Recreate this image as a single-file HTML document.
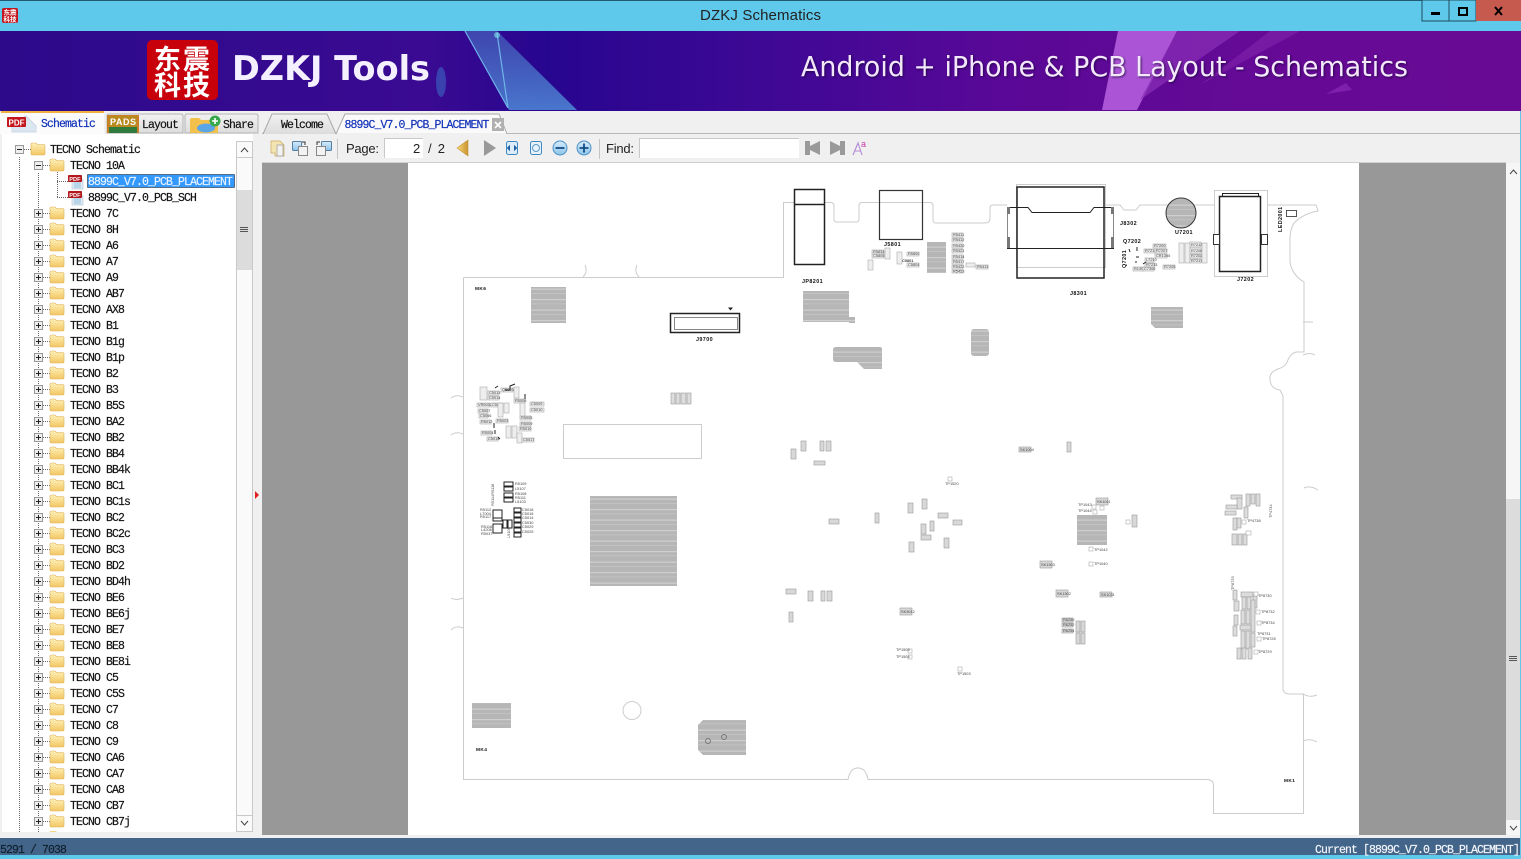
<!DOCTYPE html>
<html><head><meta charset="utf-8"><title>DZKJ Schematics</title>
<style>
html,body{margin:0;padding:0;background:#f0f0f0;width:1521px;height:859px;overflow:hidden}
svg{display:block;position:absolute;left:0;top:0}
.m{font-family:"Liberation Mono",monospace;font-size:11.5px;letter-spacing:-.9px;color:#111;fill:currentColor;stroke:currentColor;stroke-width:.18}
.s{font-family:"Liberation Sans",sans-serif}
.c{fill:#eee;stroke:#aaa;stroke-width:.6}
.t{font-family:"Liberation Sans",sans-serif;font-size:3.9px;fill:#444}
.b{font-family:"Liberation Sans",sans-serif;font-size:5.4px;font-weight:bold;fill:#111;letter-spacing:.4px}
.o{fill:none;stroke:#ccc;stroke-width:1}
.k{fill:none;stroke:#222;stroke-width:1.5}
.d{stroke:#666;stroke-width:1;stroke-dasharray:1 1;fill:none}
.sh{filter:drop-shadow(1px 1px 1px rgba(20,0,50,.7))}
</style></head><body>
<svg width="1521" height="859" viewBox="0 0 1521 859" xmlns="http://www.w3.org/2000/svg">
<defs>
<linearGradient id="bn" x1="0" x2="1" y1="0" y2="0">
<stop offset="0" stop-color="#2c0a8a"/><stop offset=".28" stop-color="#3a0a92"/><stop offset=".36" stop-color="#27068f"/><stop offset=".5" stop-color="#3d0895"/><stop offset=".66" stop-color="#5a0897"/><stop offset=".85" stop-color="#660a96"/><stop offset="1" stop-color="#680a94"/>
</linearGradient>
<linearGradient id="bm" x1="0" x2="0" y1="0" y2="1"><stop offset="0" stop-color="#4a78c8" stop-opacity=".55"/><stop offset="1" stop-color="#4f8ad8" stop-opacity=".85"/></linearGradient>
<linearGradient id="fo" x1="0" x2="0" y1="0" y2="1"><stop offset="0" stop-color="#fdf0b8"/><stop offset="1" stop-color="#f3c865"/></linearGradient>
<linearGradient id="tb" x1="0" x2="0" y1="0" y2="1"><stop offset="0" stop-color="#f2f2f2"/><stop offset="1" stop-color="#dcdcdc"/></linearGradient>
<linearGradient id="go" x1="0" x2="1" y1="0" y2="0"><stop offset="0" stop-color="#f7d878"/><stop offset="1" stop-color="#c9922e"/></linearGradient>
<linearGradient id="bl" x1="0" x2="0" y1="0" y2="1"><stop offset="0" stop-color="#d6ecfb"/><stop offset="1" stop-color="#8cc2ea"/></linearGradient>
<pattern id="h" width="10" height="10.5" patternUnits="userSpaceOnUse"><rect width="10" height="10.5" fill="#b6b6b6"/><rect y="5" width="10" height="1.2" fill="#cfcfcf"/><rect y="9.5" width="10" height=".8" fill="#c6c6c6"/></pattern>
<symbol id="f" viewBox="0 0 14 13" width="14" height="13" overflow="visible"><path d="M0 2.5Q0 1 1.5 1H5L6.5 2.5H12.5Q14 2.5 14 4V11.5Q14 13 12.5 13H1.5Q0 13 0 11.5Z" fill="url(#fo)" stroke="#dcae52" stroke-width=".6"/></symbol>
<symbol id="pl" viewBox="0 0 9 9" width="9" height="9"><rect x=".5" y=".5" width="8" height="8" fill="#eee" stroke="#999"/><path d="M2 4.500H7M4.500 2V7" stroke="#222" stroke-width="1"/></symbol>
<symbol id="mi" viewBox="0 0 9 9" width="9" height="9"><rect x=".5" y=".5" width="8" height="8" fill="#eee" stroke="#999"/><path d="M2 4.500H7" stroke="#222" stroke-width="1"/></symbol>
<symbol id="pd" viewBox="0 0 16 16" width="16" height="16"><path d="M4 2H11L15 6V15H4Z" fill="#dfe9f2" stroke="#b8cbdc" stroke-width=".7"/><path d="M6 9H13M6 11H13M6 13H13" stroke="#8fc0e0"/><rect x="0" y="1" width="14" height="7" rx="1" fill="#b3181c"/><text x="1.3" y="6.8" font-family="Liberation Sans" font-size="5.6" font-weight="bold" fill="#fff">PDF</text></symbol>
</defs>

<!-- window frame -->
<rect width="1521" height="859" fill="#f0f0f0"/>
<rect width="1521" height="31" fill="#5fc9ec"/>
<rect width="1521" height="1" fill="#1f5a72"/>
<rect x="2" y="8" width="16" height="15" rx="2" fill="#c3161c"/>
<text x="3.500" y="14.500" font-family="Noto Sans CJK SC" font-size="6.500" font-weight="bold" fill="#fff">东震</text>
<text x="3.500" y="21.500" font-family="Noto Sans CJK SC" font-size="6.500" font-weight="bold" fill="#fff">科技</text>
<text x="760.500" y="20" text-anchor="middle" class="s" font-size="15" fill="#222" textLength="121">DZKJ Schematics</text>
<rect x="1422" y="0" width="27" height="21" fill="#5fc9ec" stroke="#1f4d60"/>
<rect x="1449" y="0" width="27" height="21" fill="#5fc9ec" stroke="#1f4d60"/>
<rect x="1476" y="0" width="45" height="21" fill="#c65a4e"/>
<rect x="1431" y="12" width="9" height="3" fill="#000"/>
<rect x="1459" y="8" width="8" height="7" fill="none" stroke="#000" stroke-width="2"/>
<path d="M1495 7L1502 15M1502 7L1495 15" stroke="#000" stroke-width="2"/>

<!-- banner -->
<rect y="31" width="1521" height="80" fill="url(#bn)"/>
<ellipse cx="441" cy="82" rx="5" ry="15" fill="#3c96dc" opacity=".4"/>
<path d="M465 31H497L577 110H509Z" fill="url(#bm)"/>
<path d="M465 31L508 108M497 33L508 108" stroke="#6fb4ea" stroke-width="1.2" fill="none"/>
<circle cx="497" cy="35" r="3" fill="#7fe6ea" opacity=".6"/>
<path d="M1118 31H1177L1137 110H1102Z" fill="#ab55d6"/>
<path d="M1177 31H1240L1140 100Z" fill="#8a2fb6" opacity=".7"/>
<path d="M1270 31H1300L1200 85Z" fill="#7d1fa8" opacity=".7"/>
<path d="M1326 94L1346 83L1352 90Z" fill="#7f1fae"/>
<rect x="147" y="40" width="71" height="60" rx="5" fill="#c8000c"/>
<text x="154" y="69" font-family="Noto Sans CJK SC" font-size="27" font-weight="bold" fill="#fff" textLength="56">东震</text>
<text x="154" y="95" font-family="Noto Sans CJK SC" font-size="27" font-weight="bold" fill="#fff" textLength="56">科技</text>
<text x="232" y="80" font-family="DejaVu Sans" font-size="34" font-weight="bold" fill="#f4f0ff" textLength="198" lengthAdjust="spacingAndGlyphs">DZKJ Tools</text>
<text x="801" y="76" class="sh" font-family="DejaVu Sans" font-size="28" fill="#f2e8fa" textLength="607" lengthAdjust="spacingAndGlyphs">Android + iPhone &amp; PCB Layout - Schematics</text>

<!-- left tabs -->
<rect x="0" y="133" width="262" height="705" fill="#f0f0f0"/>
<path d="M107 133V116Q107 114 109 114H181Q183 114 183 116V133Z" fill="url(#tb)" stroke="#b5b5b5"/>
<path d="M185 133V116Q185 114 187 114H256Q258 114 258 116V133Z" fill="url(#tb)" stroke="#b5b5b5"/>
<path d="M0 134V113Q0 111 2 111H102Q104 111 104 113V134Z" fill="#fbfbfb"/>
<rect x="1" y="111" width="103" height="2" fill="#f0b040"/>
<path d="M12 122L26 116L36 126V132H12Z" fill="#dce6f0" stroke="#b4c8dc" stroke-width=".6"/>
<rect x="7" y="117" width="19" height="10" rx="1" fill="#c3161c"/>
<text x="8.500" y="125.500" class="s" font-size="8" font-weight="bold" fill="#fff">PDF</text>
<text x="41" y="127" class="m" style="color:#1030b8">Schematic</text>
<rect x="107" y="115" width="32" height="18" fill="#c88028"/>
<rect x="109" y="116" width="28" height="12" fill="#b88a20"/>
<rect x="109" y="127" width="28" height="6" fill="#2f7a3c"/>
<text x="110" y="125" class="s" font-size="9" font-weight="bold" fill="#fff" textLength="26">PADS</text>
<text x="142" y="128" class="m">Layout</text>
<path d="M190 120Q190 118 192 118H199L201 120H218V133H190Z" fill="#f3c04c"/>
<ellipse cx="206" cy="128" rx="9" ry="4.500" fill="#5aa5e6"/>
<circle cx="215" cy="121" r="5.500" fill="#39a84a"/><path d="M212 121H218M215 118V124" stroke="#fff" stroke-width="1.6"/>
<text x="223" y="128" class="m">Share</text>

<!-- tree -->
<rect x="2" y="134" width="251" height="698" fill="#fff"/>
<path class="d" d="M19.500 157V832M38.500 173V832M24 149.500H31"/>
<use href="#mi" x="15" y="145"/><use href="#f" x="31" y="142"/><text x="50" y="153" class="m">TECNO Schematic</text>
<path class="d" d="M43 165.500H50M43 213.500H50M43 229.500H50M43 245.500H50M43 261.500H50M43 277.500H50M43 293.500H50M43 309.500H50M43 325.500H50M43 341.500H50M43 357.500H50M43 373.500H50M43 389.500H50M43 405.500H50M43 421.500H50M43 437.500H50M43 453.500H50M43 469.500H50M43 485.500H50M43 501.500H50M43 517.500H50M43 533.500H50M43 549.500H50M43 565.500H50M43 581.500H50M43 597.500H50M43 613.500H50M43 629.500H50M43 645.500H50M43 661.500H50M43 677.500H50M43 693.500H50M43 709.500H50M43 725.500H50M43 741.500H50M43 757.500H50M43 773.500H50M43 789.500H50M43 805.500H50M43 821.500H50"/>
<use href="#mi" x="34" y="161"/><use href="#f" x="50" y="158"/><text x="70" y="169" class="m">TECNO 10A</text>
<path class="d" d="M57.500 172V197M57 181.500H68M57 197.500H68"/>
<use href="#pd" x="68" y="174"/>
<rect x="87.500" y="174.500" width="147" height="13" fill="#3399ff" stroke="#111" stroke-dasharray="1 1"/>
<text x="88" y="185" class="m" style="color:#e8f3ff">8899C_V7.0_PCB_PLACEMENT</text>
<use href="#pd" x="68" y="190"/><text x="88" y="201" class="m">8899C_V7.0_PCB_SCH</text>
<use href="#pl" x="34" y="209"/><use href="#f" x="50" y="206"/><text x="70" y="217" class="m">TECNO 7C</text>
<use href="#pl" x="34" y="225"/><use href="#f" x="50" y="222"/><text x="70" y="233" class="m">TECNO 8H</text>
<use href="#pl" x="34" y="241"/><use href="#f" x="50" y="238"/><text x="70" y="249" class="m">TECNO A6</text>
<use href="#pl" x="34" y="257"/><use href="#f" x="50" y="254"/><text x="70" y="265" class="m">TECNO A7</text>
<use href="#pl" x="34" y="273"/><use href="#f" x="50" y="270"/><text x="70" y="281" class="m">TECNO A9</text>
<use href="#pl" x="34" y="289"/><use href="#f" x="50" y="286"/><text x="70" y="297" class="m">TECNO AB7</text>
<use href="#pl" x="34" y="305"/><use href="#f" x="50" y="302"/><text x="70" y="313" class="m">TECNO AX8</text>
<use href="#pl" x="34" y="321"/><use href="#f" x="50" y="318"/><text x="70" y="329" class="m">TECNO B1</text>
<use href="#pl" x="34" y="337"/><use href="#f" x="50" y="334"/><text x="70" y="345" class="m">TECNO B1g</text>
<use href="#pl" x="34" y="353"/><use href="#f" x="50" y="350"/><text x="70" y="361" class="m">TECNO B1p</text>
<use href="#pl" x="34" y="369"/><use href="#f" x="50" y="366"/><text x="70" y="377" class="m">TECNO B2</text>
<use href="#pl" x="34" y="385"/><use href="#f" x="50" y="382"/><text x="70" y="393" class="m">TECNO B3</text>
<use href="#pl" x="34" y="401"/><use href="#f" x="50" y="398"/><text x="70" y="409" class="m">TECNO B5S</text>
<use href="#pl" x="34" y="417"/><use href="#f" x="50" y="414"/><text x="70" y="425" class="m">TECNO BA2</text>
<use href="#pl" x="34" y="433"/><use href="#f" x="50" y="430"/><text x="70" y="441" class="m">TECNO BB2</text>
<use href="#pl" x="34" y="449"/><use href="#f" x="50" y="446"/><text x="70" y="457" class="m">TECNO BB4</text>
<use href="#pl" x="34" y="465"/><use href="#f" x="50" y="462"/><text x="70" y="473" class="m">TECNO BB4k</text>
<use href="#pl" x="34" y="481"/><use href="#f" x="50" y="478"/><text x="70" y="489" class="m">TECNO BC1</text>
<use href="#pl" x="34" y="497"/><use href="#f" x="50" y="494"/><text x="70" y="505" class="m">TECNO BC1s</text>
<use href="#pl" x="34" y="513"/><use href="#f" x="50" y="510"/><text x="70" y="521" class="m">TECNO BC2</text>
<use href="#pl" x="34" y="529"/><use href="#f" x="50" y="526"/><text x="70" y="537" class="m">TECNO BC2c</text>
<use href="#pl" x="34" y="545"/><use href="#f" x="50" y="542"/><text x="70" y="553" class="m">TECNO BC3</text>
<use href="#pl" x="34" y="561"/><use href="#f" x="50" y="558"/><text x="70" y="569" class="m">TECNO BD2</text>
<use href="#pl" x="34" y="577"/><use href="#f" x="50" y="574"/><text x="70" y="585" class="m">TECNO BD4h</text>
<use href="#pl" x="34" y="593"/><use href="#f" x="50" y="590"/><text x="70" y="601" class="m">TECNO BE6</text>
<use href="#pl" x="34" y="609"/><use href="#f" x="50" y="606"/><text x="70" y="617" class="m">TECNO BE6j</text>
<use href="#pl" x="34" y="625"/><use href="#f" x="50" y="622"/><text x="70" y="633" class="m">TECNO BE7</text>
<use href="#pl" x="34" y="641"/><use href="#f" x="50" y="638"/><text x="70" y="649" class="m">TECNO BE8</text>
<use href="#pl" x="34" y="657"/><use href="#f" x="50" y="654"/><text x="70" y="665" class="m">TECNO BE8i</text>
<use href="#pl" x="34" y="673"/><use href="#f" x="50" y="670"/><text x="70" y="681" class="m">TECNO C5</text>
<use href="#pl" x="34" y="689"/><use href="#f" x="50" y="686"/><text x="70" y="697" class="m">TECNO C5S</text>
<use href="#pl" x="34" y="705"/><use href="#f" x="50" y="702"/><text x="70" y="713" class="m">TECNO C7</text>
<use href="#pl" x="34" y="721"/><use href="#f" x="50" y="718"/><text x="70" y="729" class="m">TECNO C8</text>
<use href="#pl" x="34" y="737"/><use href="#f" x="50" y="734"/><text x="70" y="745" class="m">TECNO C9</text>
<use href="#pl" x="34" y="753"/><use href="#f" x="50" y="750"/><text x="70" y="761" class="m">TECNO CA6</text>
<use href="#pl" x="34" y="769"/><use href="#f" x="50" y="766"/><text x="70" y="777" class="m">TECNO CA7</text>
<use href="#pl" x="34" y="785"/><use href="#f" x="50" y="782"/><text x="70" y="793" class="m">TECNO CA8</text>
<use href="#pl" x="34" y="801"/><use href="#f" x="50" y="798"/><text x="70" y="809" class="m">TECNO CB7</text>
<use href="#pl" x="34" y="817"/><use href="#f" x="50" y="814"/><text x="70" y="825" class="m">TECNO CB7j</text>
<path d="M50 832V831H56L57 832Z" fill="#f3d68a"/>
<!-- tree scrollbar -->
<rect x="236.500" y="141.500" width="16" height="690" fill="#fafafa" stroke="#c9c9c9"/>
<rect x="237" y="190" width="15" height="80" fill="#dcdcdc"/>
<path d="M240 227.500H248M240 229.500H248M240 231.500H248" stroke="#555"/>
<path d="M241 152L244.500 148L248 152" fill="none" stroke="#444"/>
<path d="M241 821L244.500 825L248 821" fill="none" stroke="#444"/>
<rect x="237" y="815" width="15" height="1" fill="#c9c9c9"/>
<rect x="237" y="157" width="15" height="1" fill="#c9c9c9"/>
<path d="M255 491L259 495L255 499Z" fill="#e02020"/>

<!-- doc tabs -->
<rect x="262" y="133" width="1259" height="1" fill="#b8b8b8"/>
<path d="M263 134L272 114H327L336 134" fill="url(#tb)" stroke="#a8a8a8"/>
<path d="M336 134L345 114H499L507 134" fill="#fafafa" stroke="#a8a8a8"/>
<rect x="337" y="133" width="169" height="2" fill="#f0f0f0"/>
<text x="281" y="128" class="m">Welcome</text>
<text x="344.500" y="128" class="m" style="color:#1030b8">8899C_V7.0_PCB_PLACEMENT</text>
<rect x="492" y="118" width="12" height="13" fill="#b0b0b0"/>
<path d="M495 122L501 128M501 122L495 128" stroke="#fff" stroke-width="1.6"/>

<!-- toolbar -->
<path d="M271 141H280L284 145V156H275V153H271Z" fill="#f4e4b0" stroke="#c9a860" stroke-width=".7"/>
<path d="M277 145H283V156H277Z" fill="#f2f2f2" stroke="#999" stroke-width=".7"/>
<rect x="292.500" y="141.500" width="9" height="9" rx="1" fill="url(#bl)" stroke="#557fa5"/>
<rect x="298.500" y="146.500" width="9" height="9" fill="#f2f2f2" stroke="#888"/>
<path d="M302 142H305V145" fill="none" stroke="#333"/>
<rect x="321.500" y="141.500" width="10" height="9" rx="1" fill="url(#bl)" stroke="#557fa5"/>
<rect x="316.500" y="146.500" width="9" height="9" fill="#f2f2f2" stroke="#888"/>
<path d="M320 142H317V145" fill="none" stroke="#333"/>
<rect x="337" y="139" width="1" height="20" fill="#c4c4c4"/>
<text x="346" y="153" class="s" font-size="13" fill="#222" textLength="33">Page:</text>
<rect x="384" y="138" width="39" height="20" fill="#fff"/>
<path d="M384.500 158V138.500H423" fill="none" stroke="#c9c9c9"/>
<text x="413" y="153" class="s" font-size="13" fill="#222">2</text>
<text x="428" y="153" class="s" font-size="13" fill="#222" textLength="17">/ 2</text>
<path d="M468 140V156L457 148Z" fill="url(#go)" stroke="#c69a3c" stroke-width=".6"/>
<path d="M484 140V156L496 148Z" fill="#999"/>
<rect x="506.500" y="141.500" width="11" height="13" rx="2" fill="#dcecf8" stroke="#3f88c0"/>
<path d="M509.500 146L507.500 148L509.500 150ZM514.500 146L516.500 148L514.500 150Z" fill="#1d5fa0" stroke="#1d5fa0"/>
<rect x="530.500" y="141.500" width="11" height="13" rx="2" fill="#e8f2fa" stroke="#3f88c0"/>
<circle cx="536" cy="148" r="3.500" fill="none" stroke="#5a9ccc"/>
<circle cx="560" cy="148" r="7" fill="url(#bl)" stroke="#4d8fc4"/><path d="M555.500 148H564.500" stroke="#124d86" stroke-width="1.8"/>
<circle cx="584" cy="148" r="7" fill="url(#bl)" stroke="#4d8fc4"/><path d="M579.500 148H588.500M584 143.500V152.500" stroke="#124d86" stroke-width="1.8"/>
<rect x="599" y="139" width="1" height="20" fill="#c4c4c4"/>
<text x="606" y="153" class="s" font-size="13" fill="#222" textLength="28">Find:</text>
<rect x="639" y="138" width="160" height="20" fill="#fff"/>
<path d="M639.500 158V138.500H799" fill="none" stroke="#c9c9c9"/>
<path d="M805 141H810V146L820 141V155L810 150V155H805Z" fill="#9a9a9a"/>
<path d="M845 141H840V146L830 141V155L840 150V155H845Z" fill="#9a9a9a"/>
<path d="M853 155L858 143L862 155M855 151H861" fill="none" stroke="#b48ad8" stroke-width="1.1"/>
<text x="861" y="147" class="s" font-size="9" fill="#c43aa8">a</text>

<!-- viewer -->
<rect x="262" y="162" width="1244" height="1" fill="#cfcfcf"/>
<rect x="262" y="163" width="1244" height="672" fill="#989898"/>
<rect x="408" y="163" width="951" height="672" fill="#fff"/>
<rect x="1506" y="163" width="15" height="672" fill="#f6f6f6"/>
<rect x="1506" y="499" width="15" height="321" fill="#dcdcdc"/>
<path d="M1509 656.500H1517M1509 658.500H1517M1509 660.500H1517" stroke="#555"/>
<path d="M1510 174L1513.500 170L1517 174" fill="none" stroke="#444"/>
<path d="M1510 826L1513.500 830L1517 826" fill="none" stroke="#444"/>

<!-- PCB outline -->
<path class="o" d="M463.500 277.500H783.500V202.500H794"/>
<path class="o" d="M824 202.500H831Q834 202.500 834 206V219Q834 222 837 222H856Q859 222 859 219V206Q859 202.500 862 202.500H930Q933 202.500 933 206V220Q933 223 936 223H985Q990 223 990 218V208Q990 205 993 205H1007"/>
<path class="o" d="M1105 205H1120L1124 210H1136L1140 205H1214"/>
<path class="o" d="M1267 205H1316L1318 211Q1305 213 1295 222Q1290 228 1290 240V262Q1292 275 1304 282V352H1296Q1290 354 1287 362Q1285 367 1278 369Q1269 372 1270 380Q1271 389 1280 390L1283 396V688Q1283 694 1290 694H1303.500V813.500H1213.500V785Q1213.500 779.500 1206 779.500H868Q866 768 858 768Q850 768 848 779.500H463.500V277.500"/>
<path class="o" d="M583 277Q588 272 585 265M639 277Q634 272 637 265M1303 322H1313M1303 355Q1310 352 1315 355M1303 694Q1310 698 1317 695M1303 741Q1310 738 1317 742M1318 490Q1310 485 1304 488M463 397Q456 394 451 398M463 434Q456 431 451 435M463 598Q456 601 451 598M463 628Q456 625 451 630"/>
<circle cx="632" cy="710.500" r="9" fill="#fff" stroke="#ccc"/>
<rect x="563.500" y="424.500" width="138" height="34" fill="#fff" stroke="#ccc"/>

<!-- hatch blocks -->
<g fill="url(#h)">
<rect x="531" y="287" width="35" height="36"/>
<rect x="803" y="291" width="46" height="31"/>
<rect x="849" y="317" width="6" height="6"/>
<path d="M836 347H880Q882 347 882 349V369H864L857 362H836Q833 362 833 359V350Q833 347 836 347Z"/>
<rect x="971" y="329" width="18" height="27" rx="3"/>
<path d="M1151 307H1183V328H1155L1151 324Z"/>
<rect x="927" y="242" width="19" height="31"/>
<rect x="590" y="496" width="87" height="90"/>
<rect x="472" y="703" width="39" height="25"/>
<path d="M703 720H746V755H703L698 750V725Z"/>
<rect x="1077" y="515" width="30" height="30"/>
</g>
<circle cx="708" cy="741" r="2.500" fill="none" stroke="#666" stroke-width=".7"/>
<circle cx="724" cy="737" r="2.500" fill="none" stroke="#666" stroke-width=".7"/>

<!-- connectors -->
<rect x="794.500" y="189.500" width="30" height="75" class="k"/>
<path class="k" d="M794 204.500H825"/>
<rect x="879.500" y="190.500" width="43" height="49" fill="none" stroke="#333" stroke-width="1.2"/>
<rect x="1016.500" y="184.500" width="89" height="83" fill="none" stroke="#ccc"/>
<rect x="1017" y="187" width="87" height="91" class="k"/>
<path d="M1007 207.500H1028L1032 212.500H1090L1094 207.500H1114" fill="none" stroke="#222"/>
<path d="M1007 248.500H1114" fill="none" stroke="#222"/>
<path d="M1007.500 207V248M1113.500 207V248" fill="none" stroke="#888"/>
<rect x="1007" y="207" width="3" height="7" fill="#777"/><rect x="1007" y="237" width="3" height="11" fill="#777"/>
<rect x="1111" y="207" width="3" height="7" fill="#777"/><rect x="1111" y="237" width="3" height="11" fill="#777"/>
<circle cx="1181" cy="213" r="15" fill="url(#h)" stroke="#333"/>
<rect x="1214.500" y="190.500" width="53" height="86" fill="none" stroke="#ccc"/>
<rect x="1219.500" y="196.500" width="41" height="75" class="k"/>
<rect x="1222.500" y="193.500" width="36" height="3" fill="none" stroke="#222"/>
<rect x="1213.500" y="234.500" width="6" height="10" fill="#fff" stroke="#333"/>
<rect x="1261.500" y="234.500" width="6" height="10" fill="#fff" stroke="#333"/>
<rect x="1286.500" y="210.500" width="10" height="6" fill="#fff" stroke="#555"/>
<rect x="670.500" y="313.500" width="69" height="19" class="k"/>
<rect x="674.500" y="317.500" width="63" height="12" fill="#fff" stroke="#888"/>
<path d="M728 307.500H733L730.500 310.500Z" fill="#222"/>

<!-- bold labels -->
<text x="802" y="283" class="b">JP8201</text>
<text x="884" y="246" class="b">J5801</text>
<text x="1070" y="295" class="b">J8301</text>
<text x="1120" y="225" class="b">J8302</text>
<text x="1123" y="243" class="b">Q7202</text>
<text x="1175" y="234" class="b">U7201</text>
<text x="1237" y="281" class="b">J7202</text>
<text x="696" y="341" class="b">J9700</text>
<text x="475" y="290" class="b" style="font-size:4.8px">MK6</text>
<text x="476" y="751" class="b" style="font-size:4.8px">MK4</text>
<text x="1284" y="782" class="b" style="font-size:4.8px">MK1</text>
<text transform="translate(1282,232) rotate(-90)" class="b">LED2001</text>
<text transform="translate(1126,268) rotate(-90)" class="b">Q7201</text>

<!-- J5801 cluster -->
<rect class="c" x="872" y="250" width="12" height="4"/><text class="t" x="873" y="253">R5834</text>
<rect class="c" x="872" y="254" width="12" height="4"/><text class="t" x="873" y="257">C5805</text>
<rect class="c" x="868" y="260" width="5" height="10"/>
<rect class="c" x="885" y="248" width="5" height="11"/>
<rect class="c" x="897" y="252" width="5" height="12"/>
<rect class="c" x="907" y="252" width="12" height="4"/><text class="t" x="908" y="255">R5800</text>
<text class="t" x="902" y="262" style="font-weight:bold">C5801</text>
<rect class="c" x="907" y="263" width="12" height="4"/><text class="t" x="908" y="266">C5804</text>
<rect class="c" x="952" y="233" width="11" height="4"/><text class="t" x="953" y="236">R5411</text>
<rect class="c" x="952" y="238" width="11" height="4"/><text class="t" x="953" y="241">R5412</text>
<rect class="c" x="952" y="244" width="11" height="4"/><text class="t" x="953" y="247">R5420</text>
<rect class="c" x="952" y="249" width="11" height="4"/><text class="t" x="953" y="252">R5421</text>
<rect class="c" x="952" y="255" width="11" height="4"/><text class="t" x="953" y="258">R5414</text>
<rect class="c" x="952" y="260" width="11" height="4"/><text class="t" x="953" y="263">R5417</text>
<rect class="c" x="952" y="265" width="11" height="4"/><text class="t" x="953" y="268">R5422</text>
<rect class="c" x="952" y="270" width="11" height="3"/><text class="t" x="953" y="272.500">R5423</text>
<rect class="c" x="966" y="263" width="9" height="4"/>
<rect class="c" x="976" y="265" width="12" height="4"/><text class="t" x="977" y="268">R5413</text>

<!-- Q7202 cluster -->
<rect class="c" x="1153" y="244" width="13" height="4"/><text class="t" x="1154" y="247">R7200</text>
<rect class="c" x="1144" y="249" width="11" height="4"/><text class="t" x="1145" y="252">R7214</text>
<rect class="c" x="1155" y="249" width="12" height="4"/><text class="t" x="1156" y="252">R7207</text>
<rect class="c" x="1155" y="254" width="12" height="4"/><text class="t" x="1156" y="257">CR1305</text>
<rect class="c" x="1145" y="258" width="9" height="4"/><text class="t" x="1146" y="261">L7210</text>
<rect class="c" x="1145" y="263" width="10" height="4"/><text class="t" x="1146" y="266">R7233</text>
<rect class="c" x="1133" y="267" width="11" height="4"/><text class="t" x="1134" y="270">R1300</text>
<rect class="c" x="1143" y="267" width="11" height="4"/><text class="t" x="1144" y="270">C7306</text>
<rect class="c" x="1163" y="265" width="12" height="4"/><text class="t" x="1164" y="268">R7205</text>
<rect class="c" x="1179" y="243" width="5" height="20"/>
<rect class="c" x="1185" y="243" width="5" height="20"/>
<rect class="c" x="1190" y="242" width="11" height="5"/><text class="t" x="1191" y="246">R7213</text>
<rect class="c" x="1190" y="248" width="11" height="5"/><text class="t" x="1191" y="252">R7206</text>
<rect class="c" x="1190" y="254" width="11" height="4"/><text class="t" x="1191" y="257">R7202</text>
<rect class="c" x="1190" y="259" width="11" height="4"/><text class="t" x="1191" y="262">R7217</text>
<rect class="c" x="1202" y="243" width="5" height="20"/>
<path d="M1137 247V251M1146 262L1143 264M1139 257H1136M1129 249L1130 252M1137 262H1135" stroke="#222" stroke-width="1"/>

<!-- audio cluster -->
<rect class="c" x="480" y="387" width="7" height="13"/>
<rect class="c" x="488" y="391" width="11" height="4"/><text class="t" x="489" y="394">C5013</text>
<rect class="c" x="488" y="396" width="11" height="4"/><text class="t" x="489" y="399">C5014</text>
<rect class="c" x="501" y="388" width="12" height="4"/><text class="t" x="502" y="391">Q5003</text>
<rect class="c" x="514" y="387" width="5" height="11"/>
<rect class="c" x="514" y="399" width="11" height="4"/><text class="t" x="515" y="402">R5006</text>
<rect class="c" x="477" y="403" width="13" height="4"/><text class="t" x="478" y="406">VR5002</text>
<rect class="c" x="491" y="403" width="11" height="4"/><text class="t" x="492" y="406">C5007</text>
<rect class="c" x="478" y="409" width="10" height="4"/><text class="t" x="479" y="412">C5007</text>
<rect class="c" x="479" y="414" width="9" height="4"/><text class="t" x="480" y="417">C5006</text>
<rect class="c" x="498" y="403" width="5" height="14"/>
<rect class="c" x="504" y="403" width="5" height="10"/>
<rect class="c" x="520" y="403" width="5" height="14"/>
<rect class="c" x="530" y="402" width="14" height="4"/><text class="t" x="531" y="405">C5009</text>
<rect class="c" x="530" y="408" width="14" height="4"/><text class="t" x="531" y="411">C5010</text>
<rect class="c" x="520" y="416" width="11" height="4"/><text class="t" x="521" y="419">R5005</text>
<rect class="c" x="520" y="422" width="11" height="4"/><text class="t" x="521" y="425">R5009</text>
<rect class="c" x="480" y="420" width="11" height="4"/><text class="t" x="481" y="423">R5012</text>
<rect class="c" x="496" y="419" width="12" height="4"/><text class="t" x="497" y="422">R5003</text>
<rect class="c" x="481" y="431" width="11" height="4"/><text class="t" x="482" y="434">R5004</text>
<rect class="c" x="487" y="437" width="11" height="4"/><text class="t" x="488" y="440">C5014</text>
<rect class="c" x="506" y="426" width="5" height="12"/>
<rect class="c" x="512" y="426" width="5" height="12"/>
<rect class="c" x="519" y="427" width="12" height="4"/><text class="t" x="520" y="430">R5010</text>
<rect class="c" x="517" y="433" width="5" height="10"/>
<rect class="c" x="522" y="438" width="12" height="4"/><text class="t" x="523" y="441">C5017</text>
<path d="M505 390H510V386L515 384M495 388L498 386M525 394V399M494 423V428M498 437L500 439M495 430V434" stroke="#222" stroke-width="1" fill="none"/>

<!-- small cluster J9700 below -->
<g fill="#ddd" stroke="#999" stroke-width=".6"><rect x="671" y="393" width="4" height="11"/><rect x="676" y="393" width="4" height="11"/><rect x="681" y="393" width="5" height="11"/><rect x="687" y="393" width="4" height="11"/></g>

<!-- R510x cluster -->
<g fill="#fff" stroke="#222" stroke-width="1">
<rect x="504" y="482" width="9" height="4"/><rect x="504" y="487" width="9" height="4"/><rect x="504" y="493" width="9" height="4"/><rect x="504" y="498" width="9" height="4"/>
<rect x="493" y="510" width="9" height="8"/><rect x="493" y="518" width="9" height="3"/>
<rect x="493" y="524" width="9" height="9"/><rect x="503" y="520" width="4" height="8"/><rect x="508" y="520" width="4" height="8"/>
<rect x="514" y="508" width="7" height="4"/><rect x="514" y="513" width="7" height="4"/><rect x="514" y="518" width="7" height="4"/><rect x="514" y="523" width="7" height="4"/><rect x="514" y="528" width="7" height="4"/><rect x="514" y="533" width="7" height="4"/>
</g>
<text class="t" x="515" y="485">R5109</text><text class="t" x="515" y="490">L5107</text><text class="t" x="515" y="495">R5108</text><text class="t" x="515" y="499">R5111</text><text class="t" x="515" y="503">L5103</text>
<text class="t" x="522" y="511">C5018</text><text class="t" x="522" y="515">C5016</text><text class="t" x="522" y="519">C5014</text><text class="t" x="522" y="524">C5030</text><text class="t" x="522" y="528">C5029</text><text class="t" x="522" y="533">C5025</text>
<text class="t" x="480" y="511">R5112</text><text class="t" x="480" y="515">L7004</text><text class="t" x="480" y="518">R5117</text><text class="t" x="481" y="528">R5116</text><text class="t" x="481" y="531">L4206</text><text class="t" x="481" y="535">R5037</text>
<text class="t" transform="translate(494,506) rotate(-90)">R5114R5118</text>
<text class="t" transform="translate(510,538) rotate(-90)">L5105</text>

<!-- center parts -->
<g fill="#d8d8d8" stroke="#999" stroke-width=".6">
<rect x="791" y="449" width="5" height="10"/><rect x="801" y="441" width="5" height="10"/><rect x="820" y="441" width="4" height="10"/><rect x="826" y="441" width="5" height="10"/><rect x="814" y="461" width="11" height="4"/>
<rect x="829" y="519" width="10" height="5"/><rect x="875" y="513" width="4" height="10"/><rect x="908" y="503" width="5" height="10"/><rect x="922" y="499" width="5" height="10"/><rect x="938" y="513" width="10" height="5"/><rect x="953" y="520" width="9" height="5"/><rect x="921" y="524" width="5" height="10"/><rect x="930" y="521" width="4" height="10"/><rect x="921" y="535" width="10" height="5"/><rect x="944" y="538" width="5" height="10"/><rect x="909" y="542" width="5" height="10"/>
<rect x="786" y="589" width="10" height="5"/><rect x="808" y="591" width="5" height="10"/><rect x="821" y="591" width="4" height="10"/><rect x="827" y="591" width="5" height="10"/><rect x="789" y="612" width="4" height="10"/>
<rect x="900" y="608" width="12" height="7"/><rect x="1019" y="447" width="12" height="5"/><rect x="1067" y="442" width="4" height="10"/>
<rect x="1040" y="561" width="12" height="7"/><rect x="1056" y="590" width="12" height="7"/><rect x="1100" y="592" width="12" height="5"/>
<rect x="1096" y="498" width="12" height="7"/><rect x="1132" y="515" width="5" height="12"/>
<rect x="1062" y="618" width="11" height="4"/><rect x="1062" y="623" width="11" height="4"/><rect x="1062" y="629" width="11" height="4"/><rect x="1076" y="621" width="4" height="11"/><rect x="1081" y="621" width="4" height="11"/><rect x="1076" y="633" width="4" height="11"/><rect x="1081" y="633" width="4" height="11"/>
</g>
<g fill="#fff" stroke="#aaa" stroke-width=".6">
<rect x="948" y="477" width="4" height="4"/><rect x="1089" y="547" width="4" height="4"/><rect x="1089" y="562" width="4" height="4"/><rect x="1092" y="505" width="4" height="4"/><rect x="1093" y="510" width="4" height="4"/><rect x="1100" y="506" width="4" height="4"/><rect x="1126" y="520" width="4" height="4"/><rect x="908" y="649" width="4" height="4"/><rect x="908" y="655" width="4" height="4"/><rect x="958" y="667" width="4" height="4"/>
</g>
<text class="t" x="945" y="485">TP1520</text><text class="t" x="1078" y="506">TP1043</text><text class="t" x="1078" y="512">TP1044</text><text class="t" x="1094" y="551">TP1042</text><text class="t" x="1094" y="565">TP1040</text><text class="t" x="896" y="651">TP1505</text><text class="t" x="896" y="658">TP1504</text><text class="t" x="957" y="675">TP1503</text>
<text class="t" x="1020" y="451">SK1004</text><text class="t" x="901" y="613">SK3012</text><text class="t" x="1041" y="566">SK1303</text><text class="t" x="1057" y="595">SK1302</text><text class="t" x="1101" y="596">SK1031</text><text class="t" x="1097" y="503">SK1011</text><text class="t" x="1063" y="621">R6250</text><text class="t" x="1063" y="626">R6252</text><text class="t" x="1063" y="632">R6254</text>

<!-- right clusters -->
<g fill="#dcdcdc" stroke="#999" stroke-width=".6">
<rect x="1231" y="495" width="11" height="4"/><rect x="1237" y="498" width="5" height="11"/><rect x="1246" y="494" width="4" height="12"/><rect x="1251" y="494" width="4" height="10"/><rect x="1256" y="494" width="4" height="12"/>
<rect x="1226" y="505" width="11" height="4"/><rect x="1225" y="511" width="11" height="4"/><rect x="1244" y="507" width="4" height="11"/><rect x="1233" y="518" width="4" height="12"/><rect x="1237" y="518" width="4" height="10"/><rect x="1232" y="534" width="5" height="11"/><rect x="1238" y="534" width="4" height="11"/><rect x="1243" y="534" width="4" height="11"/>
<rect x="1233" y="590" width="4" height="10"/><rect x="1241" y="592" width="12" height="5"/><rect x="1234" y="601" width="5" height="10"/><rect x="1242" y="597" width="4" height="12"/><rect x="1247" y="597" width="4" height="12"/><rect x="1253" y="596" width="4" height="12"/>
<rect x="1234" y="615" width="4" height="10"/><rect x="1233" y="626" width="4" height="10"/><rect x="1241" y="610" width="4" height="14"/><rect x="1246" y="610" width="4" height="14"/><rect x="1251" y="600" width="4" height="32"/>
<rect x="1240" y="625" width="11" height="5"/><rect x="1241" y="631" width="4" height="18"/><rect x="1246" y="631" width="4" height="18"/><rect x="1251" y="633" width="4" height="14"/>
<rect x="1237" y="648" width="4" height="11"/><rect x="1242" y="648" width="4" height="11"/><rect x="1248" y="648" width="4" height="11"/>
</g>
<g fill="#fff" stroke="#aaa" stroke-width=".6"><rect x="1242" y="520" width="4" height="4"/><rect x="1246" y="531" width="5" height="4"/><rect x="1254" y="650" width="4" height="4"/><rect x="1256" y="610" width="4" height="4"/><rect x="1257" y="621" width="4" height="4"/><rect x="1257" y="637" width="4" height="4"/><rect x="1254" y="592" width="4" height="4"/></g>
<text class="t" x="1247" y="522">TP4738</text><text class="t" x="1258" y="597">TP8730</text><text class="t" x="1261" y="613">TP8732</text><text class="t" x="1261" y="624">TP8734</text><text class="t" x="1257" y="635">TP8731</text><text class="t" x="1262" y="640">TP8728</text><text class="t" x="1258" y="653">TP8729</text>
<text class="t" transform="translate(1234,590) rotate(-90)">TP8725</text>
<text class="t" transform="translate(1272,518) rotate(-90)">TP4734</text>

<!-- status -->
<rect y="836" width="1521" height="2" fill="#f0f0f0"/>
<rect y="838" width="1521" height="17" fill="#44658a"/>
<rect y="855" width="1521" height="4" fill="#5fc9ec"/>
<rect x="1520" y="111" width="1" height="748" fill="#5fc9ec"/>
<text x="0" y="853" class="m" style="color:#10202e">5291 / 7038</text>
<text x="1315" y="853" class="m" style="color:#f2f6fa">Current [8899C_V7.0_PCB_PLACEMENT]</text>
</svg>
</body></html>
